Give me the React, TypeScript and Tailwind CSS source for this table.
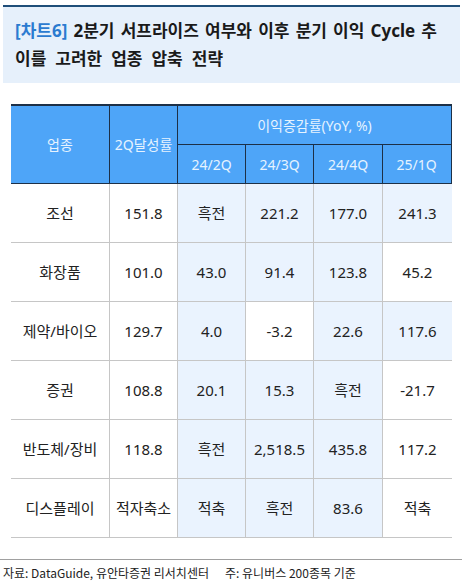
import React from "react";

const font = { fontFamily: '"Noto Sans", "Noto Sans CJK KR", sans-serif' };
const footFont = { fontFamily: '"Noto Sans CJK KR", sans-serif' };

type Cell = { t: string; b: boolean };
const rows: { name: string; rate: string; cells: Cell[] }[] = [
  { name: "조선", rate: "151.8", cells: [{ t: "흑전", b: true }, { t: "221.2", b: true }, { t: "177.0", b: true }, { t: "241.3", b: true }] },
  { name: "화장품", rate: "101.0", cells: [{ t: "43.0", b: true }, { t: "91.4", b: true }, { t: "123.8", b: true }, { t: "45.2", b: false }] },
  { name: "제약/바이오", rate: "129.7", cells: [{ t: "4.0", b: true }, { t: "-3.2", b: false }, { t: "22.6", b: true }, { t: "117.6", b: true }] },
  { name: "증권", rate: "108.8", cells: [{ t: "20.1", b: true }, { t: "15.3", b: true }, { t: "흑전", b: true }, { t: "-21.7", b: false }] },
  { name: "반도체/장비", rate: "118.8", cells: [{ t: "흑전", b: true }, { t: "2,518.5", b: true }, { t: "435.8", b: true }, { t: "117.2", b: false }] },
  { name: "디스플레이", rate: "적자축소", cells: [{ t: "적축", b: true }, { t: "흑전", b: true }, { t: "83.6", b: true }, { t: "적축", b: false }] },
];

export default function App() {
  return (
    <div className="w-[463px] h-[588px] bg-white overflow-hidden" style={font}>
      <div className="mt-[5px] ml-[3px] w-[457px] h-[2px] bg-[#1f4e79]" />
      <div className="ml-[3px] w-[457px] h-[76px] bg-[#e6f0fb] pt-[9px] pl-[12px]">
        <div className="flex justify-between w-[422px] h-[28px] items-center text-[17px] font-bold text-[#1a1a1a] leading-none">
          <span className="text-[#2b7bd0]">[차트6]</span>
          <span>2분기</span>
          <span>서프라이즈</span>
          <span>여부와</span>
          <span>이후</span>
          <span>분기</span>
          <span>이익</span>
          <span>Cycle</span>
          <span>추</span>
        </div>
        <div className="flex gap-[9px] h-[28px] items-center text-[17px] font-bold text-[#1a1a1a] leading-none">
          <span>이를</span>
          <span>고려한</span>
          <span>업종</span>
          <span>압축</span>
          <span>전략</span>
        </div>
      </div>

      <div className="ml-[11px] mt-[21px] w-[441px]">
        <div className="flex h-[80px] border-t-2 border-[#1d3047] bg-[#4ea5f8] text-[14px] text-[#e6f3ff] border-r border-r-[#1d3047] border-b border-b-[#1d3047]">
          <div className="w-[99px] border-r border-[#1d3047] flex items-center justify-center">업종</div>
          <div className="w-[68px] border-r border-[#1d3047] flex items-center justify-center">2Q달성률</div>
          <div className="flex-1 flex flex-col">
            <div className="h-[39px] border-b border-[#1d3047] flex items-center justify-center">이익증감률(YoY, %)</div>
            <div className="flex-1 grid grid-cols-[68px_68px_69px_67px]">
              <div className="border-r border-[#1d3047] flex items-center justify-center">24/2Q</div>
              <div className="border-r border-[#1d3047] flex items-center justify-center">24/3Q</div>
              <div className="border-r border-[#1d3047] flex items-center justify-center">24/4Q</div>
              <div className="flex items-center justify-center">25/1Q</div>
            </div>
          </div>
        </div>
        {rows.map((r) => (
          <div key={r.name} className="grid grid-cols-[99px_68px_68px_68px_69px_69px] h-[59px] border-b border-[#c6c6c6] text-[15px] text-[#222]">
            <div className="border-r border-[#c6c6c6] flex items-center justify-center">{r.name}</div>
            <div className="border-r border-[#c6c6c6] flex items-center justify-center">{r.rate}</div>
            {r.cells.map((c, i) => (
              <div
                key={i}
                className={
                  "flex items-center justify-center " +
                  (i < 3 ? "border-r border-[#c6c6c6] " : "") +
                  (c.b ? "bg-[#eaf3fe]" : "bg-white")
                }
              >
                {c.t}
              </div>
            ))}
          </div>
        ))}
      </div>

      <div className="mt-[21px] w-[462px] h-px bg-[#a0a0a0]" />
      <div className="mt-[5px] ml-[3px] flex text-[12px] leading-[16px] text-[#222]" style={footFont}>
        <span>자료: DataGuide, 유안타증권 리서치센터</span>
        <span className="ml-[16px]">주: 유니버스 200종목 기준</span>
      </div>
    </div>
  );
}
